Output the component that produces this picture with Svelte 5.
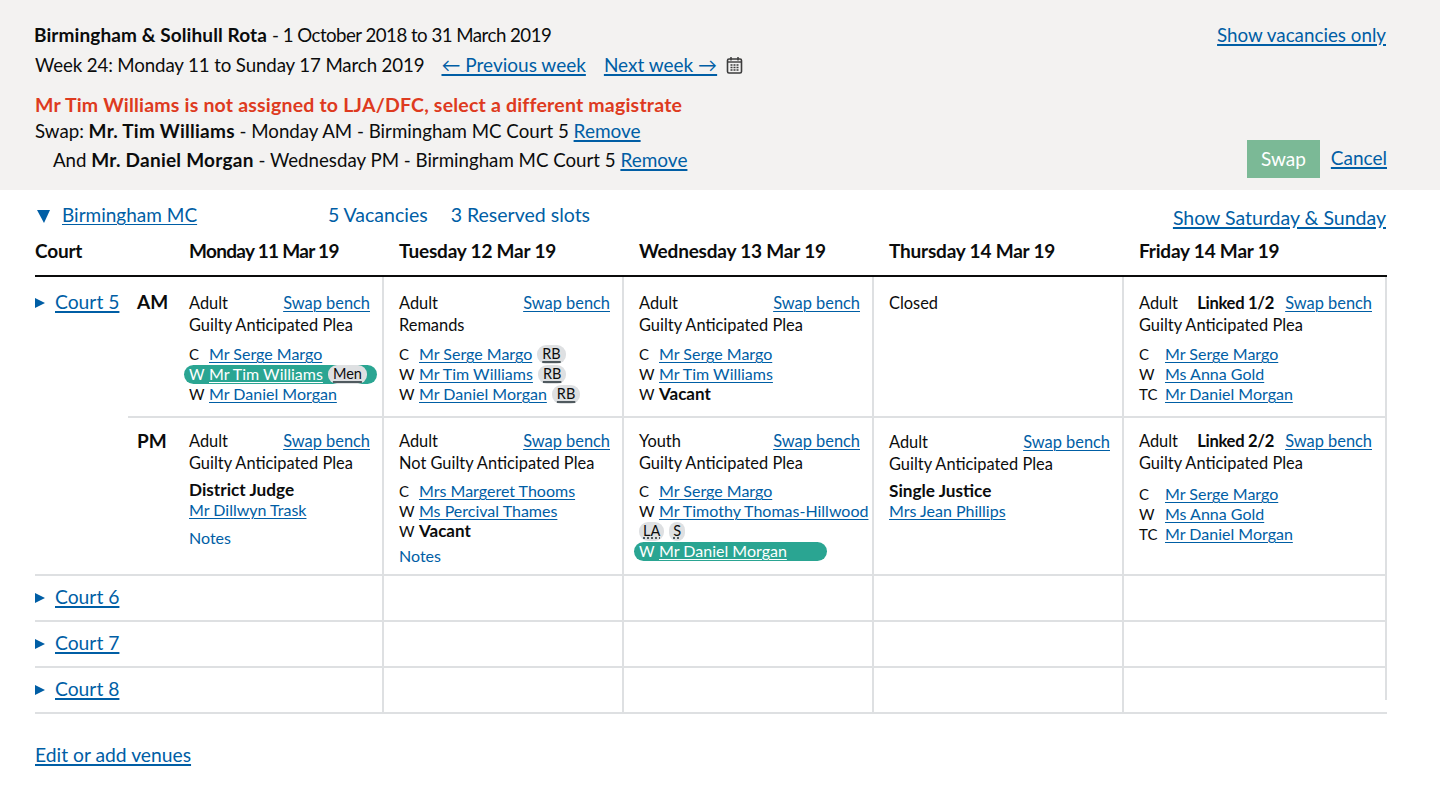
<script>
  // Rota data, one entry per session of Court 5
  const M = 'Mr Serge Margo'
  const T = 'Mr Tim Williams'
  const D = 'Mr Daniel Morgan'
  const G = 'Guilty Anticipated Plea'

  const am = [
    { type: 'Adult', plea: G, swap: true, bench: [
      { role: 'C', name: M },
      { role: 'W', name: T, picked: true, tags: [{ label: 'Men' }] },
      { role: 'W', name: D },
    ] },
    { type: 'Adult', plea: 'Remands', swap: true, bench: [
      { role: 'C', name: M, tags: [{ label: 'RB' }] },
      { role: 'W', name: T, tags: [{ label: 'RB' }] },
      { role: 'W', name: D, tags: [{ label: 'RB' }] },
    ] },
    { type: 'Adult', plea: G, swap: true, bench: [
      { role: 'C', name: M },
      { role: 'W', name: T },
      { role: 'W', vacant: true },
    ] },
    { closed: true },
    { type: 'Adult', linked: 'Linked 1/2', plea: G, swap: true, wide: true, bench: [
      { role: 'C', name: M },
      { role: 'W', name: 'Ms Anna Gold' },
      { role: 'TC', name: D },
    ] },
  ]

  const pm = [
    { type: 'Adult', plea: G, swap: true, judgeTitle: 'District Judge', judge: 'Mr Dillwyn Trask', notes: true, noteGap: 8 },
    { type: 'Adult', plea: 'Not Guilty Anticipated Plea', swap: true, notes: true, noteGap: 5, bench: [
      { role: 'C', name: 'Mrs Margeret Thooms' },
      { role: 'W', name: 'Ms Percival Thames' },
      { role: 'W', vacant: true },
    ] },
    { type: 'Youth', plea: G, swap: true, bench: [
      { role: 'C', name: M },
      { role: 'W', name: 'Mr Timothy Thomas-Hillwood', tagsBelow: ['LA', 'S'] },
      { role: 'W', name: D, picked: true },
    ] },
    { type: 'Adult', plea: G, swap: true, shift: true, judgeTitle: 'Single Justice', judge: 'Mrs Jean Phillips' },
    { type: 'Adult', linked: 'Linked 2/2', plea: G, swap: true, wide: true, low: true, bench: [
      { role: 'C', name: M },
      { role: 'W', name: 'Ms Anna Gold' },
      { role: 'TC', name: D },
    ] },
  ]

  const days = ['Monday 11 Mar 19', 'Tuesday 12 Mar 19', 'Wednesday 13 Mar 19', 'Thursday 14 Mar 19', 'Friday 14 Mar 19']
  const emptyCourts = ['Court 6', 'Court 7', 'Court 8']
</script>

{#snippet session(s)}
  {#if s.closed}
    <div class="head"><span>Closed</span></div>
  {:else}
    <div class="head" class:shift={s.shift}>
      <span>{s.type}</span>
      {#if s.linked}<b class="linked">{s.linked}</b>{/if}
      <a href="#top" class="swap-link">Swap bench</a>
    </div>
    <div class="plea" class:shift={s.shift}>{s.plea}</div>
    {#if s.judge}
      <div class="judge"><b>{s.judgeTitle}</b><a href="#top">{s.judge}</a></div>
    {/if}
    {#if s.bench}
      <ul class="bench" class:low={s.low}>
        {#each s.bench as b}
          <li class:picked={b.picked}>
            <span class="role" class:wide={s.wide}>{b.role}</span>
            {#if b.vacant}
              <b>Vacant</b>
            {:else}
              <a href="#top">{b.name}</a>
            {/if}
            {#each b.tags ?? [] as t}
              <abbr class="tag">{t.label}</abbr>
            {/each}
          </li>
          {#if b.tagsBelow}
            <li class="below">
              {#each b.tagsBelow as t}<abbr class="tag dotted">{t}</abbr>{/each}
            </li>
          {/if}
        {/each}
      </ul>
    {/if}
    {#if s.notes}
      <a href="#top" class="notes" style="margin-top: {s.noteGap}px">Notes</a>
    {/if}
  {/if}
{/snippet}

<main id="top">
  <header class="panel">
    <div class="panel-left">
      <p class="line-title"><b>Birmingham &amp; Solihull Rota</b><span class="dates">- 1 October 2018 to 31 March 2019</span></p>
      <p class="line-week">
        <span class="week">Week 24: Monday 11 to Sunday 17 March 2019</span>
        <a href="#top">← Previous week</a>
        <a href="#top">Next week →</a>
        <svg class="cal" width="17" height="18" viewBox="0 0 17 18" fill="none" stroke="#3c3c3c">
          <rect x="1.5" y="3" width="14" height="14" rx="1.5" stroke-width="1.6" />
          <path d="M1.5 6h14" stroke-width="1.4" />
          <path d="M5 1v3.5M12 1v3.5" stroke-width="1.5" />
          <path d="M4.5 9h2M7.5 9h2M10.5 9h2M4.5 11.5h2M7.5 11.5h2M10.5 11.5h2M4.5 14h2M7.5 14h2M10.5 14h2" stroke-width="1.6" />
        </svg>
      </p>
      <p class="error">Mr Tim Williams is not assigned to LJA/DFC, select a different magistrate</p>
      <p class="line-swap">Swap: <b>Mr. Tim Williams</b> - Monday AM - Birmingham MC Court 5 <a href="#top">Remove</a></p>
      <p class="line-and">And <b>Mr. Daniel Morgan</b> - Wednesday PM - Birmingham MC Court 5 <a href="#top">Remove</a></p>
    </div>
    <div class="panel-right">
      <a href="#top" class="vacancies">Show vacancies only</a>
      <div class="actions">
        <button type="button">Swap</button>
        <a href="#top">Cancel</a>
      </div>
    </div>
  </header>

  <section class="rota">
    <div class="venue">
      <span class="down"></span>
      <a href="#top" class="venue-name">Birmingham MC</a>
      <span class="stat first">5 Vacancies</span>
      <span class="stat">3 Reserved slots</span>
      <a href="#top" class="weekend">Show Saturday &amp; Sunday</a>
    </div>

    <table>
      <colgroup>
        <col style="width: 93px" />
        <col style="width: 61px" />
        <col style="width: 195px" />
        <col style="width: 240px" />
        <col style="width: 250px" />
        <col style="width: 250px" />
        <col style="width: 263px" />
      </colgroup>
      <thead>
        <tr>
          <th colspan="2">Court</th>
          {#each days as d, i}
            <th class:day={i > 0} class:monday={i === 0}>{d}</th>
          {/each}
        </tr>
      </thead>
      <tbody>
        <tr class="am">
          <td rowspan="2" class="court">
            <span class="arrow"></span><a href="#top">Court 5</a>
          </td>
          <td class="period"><b>AM</b></td>
          {#each am as s, i}
            <td class="slot" class:first={i === 0}>{@render session(s)}</td>
          {/each}
        </tr>
        <tr class="pm">
          <td class="period"><b>PM</b></td>
          {#each pm as s, i}
            <td class="slot" class:first={i === 0}>{@render session(s)}</td>
          {/each}
        </tr>
        {#each emptyCourts as c, n}
          <tr class="empty" class:last={n === 2}>
            <td colspan="3" class="court"><span class="arrow"></span><a href="#top">{c}</a></td>
            <td></td>
            <td></td>
            <td></td>
            <td></td>
          </tr>
        {/each}
      </tbody>
    </table>

    <a href="#top" class="edit">Edit or add venues</a>
  </section>
</main>

<style>
  :global(body) {
    margin: 0;
    background: #fff;
    color: #0b0c0c;
    font-family: Lato, "Noto Sans", sans-serif;
    font-size: 16px;
  }
  a {
    color: #005ea5;
    text-decoration: underline;
    text-decoration-thickness: 1px;
    text-underline-offset: 2px;
  }
  p {
    margin: 0;
  }

  /* Top panel */
  .panel {
    display: flex;
    justify-content: space-between;
    height: 190px;
    box-sizing: border-box;
    padding: 22px 53px 0 35px;
    background: #f3f2f1;
    font-size: 18.7px;
  }
  .panel a {
    font-size: 19px;
    text-decoration-thickness: 2px;
  }
  .panel b {
    font-size: 19px;
    letter-spacing: 0.25px;
  }
  .line-title {
    line-height: 26px;
    margin-left: -1px;
  }
  .line-title b {
    letter-spacing: 0.1px;
  }
  .dates {
    margin-left: 5px;
    letter-spacing: -0.53px;
  }
  .line-week {
    display: flex;
    align-items: center;
    line-height: 26px;
    margin-top: 4px;
  }
  .week {
    margin-right: 17px;
    letter-spacing: -0.12px;
  }
  .line-week a {
    margin-right: 18px;
  }
  .line-week a + a {
    margin-right: 9px;
  }
  .error {
    margin-top: 14px;
    line-height: 26px;
    font-size: 19.5px;
    letter-spacing: 0.2px;
    font-weight: 700;
    color: #de3a20;
  }
  .line-swap {
    line-height: 26px;
  }
  .line-and {
    line-height: 26px;
    margin-top: 3px;
    padding-left: 18px;
  }
  .panel-right {
    display: flex;
    flex-direction: column;
    align-items: flex-end;
  }
  .panel .vacancies {
    line-height: 26px;
    font-size: 18.8px;
    margin-right: 1px;
  }
  .actions {
    display: flex;
    align-items: flex-end;
    gap: 11px;
    margin-top: 92px;
  }
  .actions a {
    line-height: 26px;
    margin-bottom: 7px;
  }
  button {
    width: 73px;
    height: 38px;
    border: 0;
    background: #7bb996;
    color: #fff;
    font: inherit;
    font-size: 19px;
    padding: 0 0 2px;
  }

  /* Venue bar */
  .rota {
    padding: 0 53px 0 35px;
  }
  .venue {
    display: flex;
    align-items: flex-start;
    height: 42px;
    padding-top: 12px;
    box-sizing: border-box;
    font-size: 19.5px;
    line-height: 26px;
  }
  .down {
    width: 0;
    height: 0;
    margin: 8px 12px 0 2px;
    border-top: 13px solid #005ea5;
    border-left: 7px solid transparent;
    border-right: 6px solid transparent;
  }
  .venue-name {
    width: 266px;
    font-size: 19px;
  }
  .stat {
    color: #005ea5;
    margin-right: 23px;
  }
  .weekend {
    margin-left: auto;
    margin-top: 3px;
    margin-right: 1px;
    text-decoration-thickness: 2px;
  }

  /* Table */
  table {
    width: 1352px;
    table-layout: fixed;
    border-collapse: separate;
    border-spacing: 0;
  }
  th {
    height: 37px;
    padding: 0 0 6px;
    text-align: left;
    font-size: 19px;
    font-weight: 700;
    letter-spacing: -0.2px;
    border-bottom: 2px solid #0b0c0c;
  }
  th.monday {
    letter-spacing: -0.7px;
  }
  th.day {
    padding-left: 15px;
  }
  td {
    padding: 0;
    vertical-align: top;
    border-right: 2px solid #dee0e2;
  }
  td.court {
    border-right: 0;
    border-bottom: 2px solid #dee0e2;
    padding-top: 12px;
    font-size: 19px;
    line-height: 26px;
  }
  .arrow {
    display: inline-block;
    width: 0;
    height: 0;
    margin-right: 10px;
    vertical-align: 1px;
    border-left: 10px solid #005ea5;
    border-top: 5px solid transparent;
    border-bottom: 5px solid transparent;
  }
  .court a {
    font-size: 19.3px;
    text-decoration-thickness: 2px;
  }
  td.period {
    border-right: 0;
    border-bottom: 2px solid #dee0e2;
    padding-left: 9px;
    padding-top: 10px;
    font-size: 19px;
    line-height: 26px;
  }
  .am td.period {
    padding-top: 12px;
  }
  td.slot {
    border-bottom: 2px solid #dee0e2;
    padding: 12px 12px 0 15px;
    line-height: 22px;
  }
  td.slot:last-child {
    padding-right: 13px;
  }
  .am td.slot {
    height: 124px;
    padding-top: 15px;
  }
  .pm td.slot {
    height: 144px;
  }
  td.slot.first {
    padding-left: 0;
  }
  .empty td {
    height: 44px;
    border-bottom: 2px solid #dee0e2;
  }
  .empty td.court {
    height: 32px;
    padding-top: 8px;
    padding-bottom: 4px;
    border-right: 2px solid #dee0e2;
  }
  .last td:last-child {
    border-right: 0;
    position: relative;
  }
  .last td:last-child::after {
    content: '';
    position: absolute;
    top: 0;
    right: 0;
    width: 2px;
    height: 32px;
    background: #dee0e2;
  }

  /* Session cell */
  .head {
    display: flex;
    align-items: baseline;
    font-size: 16.4px;
  }
  .plea {
    font-size: 16.4px;
  }
  .head.shift {
    margin-top: 1px;
  }
  .linked {
    margin-left: auto;
    margin-right: 11px;
    font-size: 16.6px;
    letter-spacing: -0.3px;
  }
  .swap-link {
    margin-left: auto;
  }
  .linked + .swap-link {
    margin-left: 0;
  }
  .bench {
    list-style: none;
    margin: 8px 0 0;
    padding: 0;
    line-height: 20px;
  }
  .bench b {
    font-size: 17px;
  }
  .pm .bench {
    margin-top: 7px;
  }
  .pm .bench.low {
    margin-top: 10px;
  }
  .bench li {
    display: flex;
    align-items: center;
    white-space: nowrap;
  }
  .role {
    width: 20px;
    flex: none;
    font-size: 15px;
  }
  .role.wide {
    width: 26px;
  }
  .bench .picked {
    width: 193px;
    height: 19px;
    margin-top: 1px;
    margin-left: -5px;
    padding: 0 0 1px 5px;
    box-sizing: border-box;
    border-radius: 10px;
    background: #2aa592;
    color: #fff;
  }
  .picked a {
    color: #fff;
  }
  .tag {
    margin-left: 5px;
    padding: 0 5px;
    height: 19px;
    line-height: 17px;
    font-size: 14.5px;
    border-radius: 9px;
    background: #dee0e2;
    color: #0b0c0c;
    text-decoration: underline;
    text-decoration-color: #505a5f;
    text-decoration-thickness: 2px;
    text-underline-offset: 2px;
  }
  .bench .below {
    height: 20px;
  }
  .tag.dotted {
    margin: 0 5px 0 0;
    padding: 0 4px;
    text-decoration-style: dotted;
  }
  .judge {
    display: flex;
    flex-direction: column;
    align-items: flex-start;
    margin-top: 6px;
    line-height: 20px;
  }
  .judge b {
    font-size: 17.2px;
  }
  .notes {
    display: block;
    width: fit-content;
    line-height: 20px;
    text-decoration: none;
  }

  .edit {
    display: inline-block;
    margin-top: 28px;
    font-size: 19.3px;
    line-height: 26px;
    text-decoration-thickness: 2px;
  }
</style>
